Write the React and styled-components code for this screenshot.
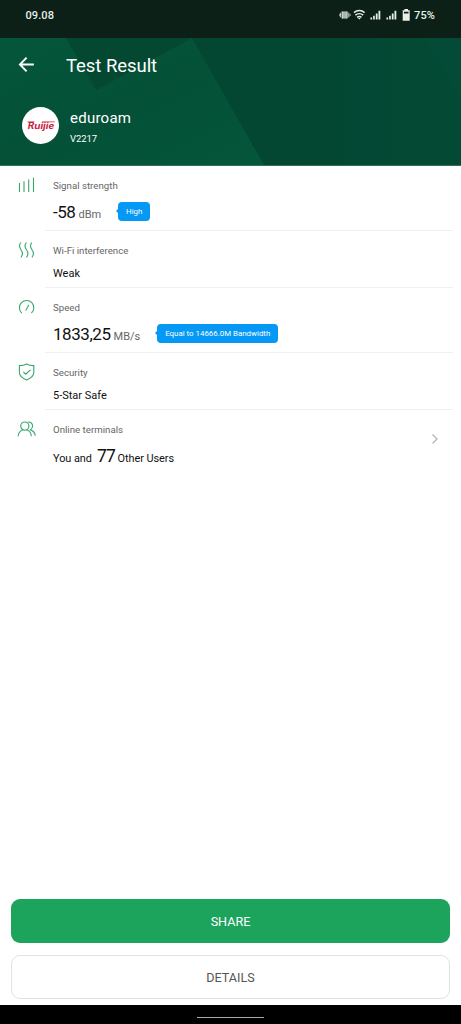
import React from 'react';
import styled, { createGlobalStyle } from 'styled-components';

function App() {
  return (
    <Screen>
      <GlobalStyle />
      <StatusBar>
        <Time>09.08</Time>
        <StatusIcons />
        <Battery>75%</Battery>
      </StatusBar>
      <Header>
        <HeaderPattern />
        <TitleBar>
          <BackIcon />
          <Title>Test Result</Title>
        </TitleBar>
        <Network>
          <Avatar>
            <Logo />
          </Avatar>
          <NetworkInfo>
            <Ssid>eduroam</Ssid>
            <Device>V2217</Device>
          </NetworkInfo>
        </Network>
      </Header>
      <List>
        <Row $height={65}>
          <SignalIcon />
          <Content>
            <Label>Signal strength</Label>
            <Value>
              <Big>-58</Big>
              <Unit>dBm</Unit>
              <Tag $width={32}>High</Tag>
            </Value>
          </Content>
        </Row>
        <Row $height={57}>
          <WavesIcon />
          <Content>
            <Label>Wi-Fi interference</Label>
            <Text>Weak</Text>
          </Content>
        </Row>
        <Row $height={65}>
          <SpeedIcon />
          <Content>
            <Label>Speed</Label>
            <Value>
              <Big>1833,25</Big>
              <Unit>MB/s</Unit>
              <Tag $width={121}>Equal to 14666.0M Bandwidth</Tag>
            </Value>
          </Content>
        </Row>
        <Row $height={57}>
          <ShieldIcon />
          <Content>
            <Label>Security</Label>
            <Text>5-Star Safe</Text>
          </Content>
        </Row>
        <Row $height={65}>
          <UsersIcon />
          <Content $last>
            <Label>Online terminals</Label>
            <Users>
              You and <Count>77</Count> Other Users
            </Users>
          </Content>
          <Chevron />
        </Row>
      </List>
      <Actions>
        <Button $primary>SHARE</Button>
        <Button>DETAILS</Button>
      </Actions>
      <NavBar>
        <Handle />
      </NavBar>
    </Screen>
  );
}

export default App;

function StatusIcons() {
  return (
    <svg width="72" height="14" viewBox="0 0 72 14" fill="#e8efe9">
      <path d="M3 3.4h5v7.2H3z" opacity=".72" />
      <path d="M2.6 3.4h.9v7.2h-.9zM7.7 3.4h.9v7.2h-.9zM.9 4.8h.9v4.4h-.9zM9.4 4.8h.9v4.4h-.9zM-.2 6.2h.8v1.6h-.8zM10.8 6.2h.8v1.6h-.8z" />
      <g fill="none" stroke="#e8efe9" strokeWidth="1.5">
        <path d="M15 4.6c3-2.7 7.6-2.7 10.6 0" />
        <path d="M16.4 7.1c2.2-1.9 5.6-1.9 7.8 0" />
        <path d="M18.1 9.3c1.3-1 3.1-1 4.4 0" />
      </g>
      <path d="M18.9 10h2.8l-1.4 1.6z" />
      <path d="M31.4 9.6h1.7v2h-1.7zM34.1 7.8h1.7v3.8h-1.7zM36.8 5.5h1.8v6.1h-1.8zM39.5 2.7h1.8v8.9h-1.8z" />
      <path d="M47.4 9.6h1.7v2h-1.7zM50.1 7.8h1.7v3.8h-1.7zM52.8 5.5h1.8v6.1h-1.8zM55.5 2.7h1.8v8.9h-1.8z" />
      <path
        fillRule="evenodd"
        d="M65.4 1H69v1.2h1.7v10.6h-7V2.2h1.7zM64.9 3.7v1.7h4.6V3.7z"
      />
    </svg>
  );
}

function HeaderPattern() {
  return (
    <Pattern viewBox="0 0 461 127" preserveAspectRatio="none">
      <defs>
        <linearGradient id="right" x1="0" y1="0" x2="1" y2="0">
          <stop offset="0" stopColor="#034732" />
          <stop offset=".55" stopColor="#034632" />
          <stop offset="1" stopColor="#034a35" />
        </linearGradient>
        <linearGradient id="left" x1="0" y1="0" x2="1" y2="1">
          <stop offset="0" stopColor="#04563a" />
          <stop offset=".5" stopColor="#045138" />
          <stop offset="1" stopColor="#04563a" />
        </linearGradient>
      </defs>
      <path d="M0 0h461v127H0z" fill="url(#right)" />
      <path d="M0 0h192l72 127H0z" fill="url(#left)" />
      <path d="M66 0h126L96 52z" fill="#044832" />
      <path d="M425 0h36v64z" fill="#044d38" opacity=".6" />
    </Pattern>
  );
}

function BackIcon() {
  return (
    <svg width="16" height="16" viewBox="0 0 16 16" fill="none" stroke="#fff" strokeWidth="1.9">
      <path d="M15.8 7.500H2.200M8.600.700L1.900 7.500l6.700 6.800" />
    </svg>
  );
}

function Logo() {
  return (
    <svg width="30" height="14" viewBox="0 0 30 14">
      <text
        x="1.8"
        y="9.6"
        fill="#c8213f"
        fontFamily="Inter, Roboto, sans-serif"
        fontSize="9"
        fontWeight="700"
        fontStyle="italic"
        textLength="26.5"
        lengthAdjust="spacingAndGlyphs"
      >
        Ruijie
      </text>
      <path d="M1.5 2.5h7l-.4 1H1.800zM16 2.500h12.800l-.4.8H16z" fill="#c8213f" />
    </svg>
  );
}

function SignalIcon() {
  return (
    <Icon viewBox="0 0 20 20">
      <path d="M2.5 8v9M7 6.2V17M11.7 4.5V17M16.5 2.7V17" />
    </Icon>
  );
}

function WavesIcon() {
  return (
    <Icon viewBox="0 0 20 20">
      <path d="M3.9 2.500C1.300 5.300 2.400 7.500 4 9.700s2.300 4.800-.1 7.600" />
      <path d="M9.400 2.500c-2.600 2.800-1.500 5 .1 7.200s2.300 4.800-.1 7.600" />
      <path d="M14.900 2.500c-2.600 2.800-1.500 5 .1 7.200s2.300 4.800-.1 7.600" />
    </Icon>
  );
}

function SpeedIcon() {
  return (
    <Icon viewBox="0 0 20 20">
      <path d="M4.8 16a7.2 7.2 0 1 1 9.6 0M8.700 13.400l3.200-5.600" />
    </Icon>
  );
}

function ShieldIcon() {
  return (
    <Icon viewBox="0 0 20 20">
      <path d="M9.6 1.900c2 1.100 4.400 1.600 7.200 1.700v7c0 3.600-3.200 5.800-7.200 7.500-4-1.700-7.200-3.900-7.200-7.500v-7c2.800-.1 5.200-.6 7.200-1.700zM6.300 9.900l2.400 2.300 4.700-4.400" />
    </Icon>
  );
}

function UsersIcon() {
  return (
    <Icon viewBox="0 0 20 20">
      <circle cx="7.8" cy="7.1" r="4.1" />
      <path d="M1.100 17.200c.3-3.200 2-5.400 4.500-6.300M10 10.900c2.500.9 4.100 3.100 4.400 6.300M11 3.100c2.700-.3 4.600 1.500 4.600 3.900 0 1.700-.8 3-2.200 3.900 2.600.8 4.500 2.800 4.900 5.900" />
    </Icon>
  );
}

function Chevron() {
  return (
    <ChevronSvg width="8" height="12" viewBox="0 0 8 12">
      <path d="M1.5 1.500L6 6l-4.500 4.500" />
    </ChevronSvg>
  );
}

const GlobalStyle = createGlobalStyle`
  * {
    box-sizing: border-box;
  }
  body {
    margin: 0;
    font-family: Roboto, sans-serif;
  }
`;
const Screen = styled.div`
  display: flex;
  flex-direction: column;
  height: 1024px;
  background: #fff;
`;
const StatusBar = styled.div`
  display: flex;
  align-items: center;
  height: 38px;
  padding: 0 26px 8px 25.5px;
  background: #0c2017;
  color: #e8efe9;
  font-size: 11px;
  font-weight: 500;
  svg {
    margin-right: 3px;
  }
`;
const Time = styled.span`
  flex: 1;
  letter-spacing: 0.1px;
`;
const Battery = styled.span`
  letter-spacing: 0.1px;
`;
const Header = styled.header`
  position: relative;
  height: 128px;
  border-bottom: 1px solid #36705a;
  color: #fff;
`;
const Pattern = styled.svg`
  position: absolute;
  width: 100%;
  height: 100%;
`;
const TitleBar = styled.div`
  position: relative;
  display: flex;
  align-items: center;
  gap: 32px;
  height: 53px;
  padding-left: 18px;
`;
const Title = styled.h1`
  margin: 2px 0 0;
  font-size: 18.5px;
  font-weight: 400;
  letter-spacing: -0.05px;
`;
const Network = styled.div`
  position: relative;
  display: flex;
  gap: 11px;
  padding: 15px 22px 0;
`;
const Avatar = styled.div`
  display: flex;
  align-items: center;
  justify-content: center;
  width: 37px;
  height: 37px;
  margin-top: 1px;
  border-radius: 50%;
  background: #fff;
`;
const NetworkInfo = styled.div`
  display: flex;
  flex-direction: column;
  padding-top: 1px;
`;
const Ssid = styled.span`
  font-size: 15px;
  line-height: 22px;
  letter-spacing: 0.25px;
`;
const Device = styled.span`
  font-size: 9.5px;
  line-height: 19px;
  letter-spacing: -0.05px;
`;
const List = styled.main`
  flex: 1;
`;
const Row = styled.section`
  display: flex;
  height: ${({ $height }) => $height}px;
  padding: 0 8px 0 17px;
`;
const Icon = styled.svg`
  width: 20px;
  height: 20px;
  margin-top: 9px;
  flex-shrink: 0;
  fill: none;
  stroke: #36a76c;
  stroke-width: 1.1;
`;
const Content = styled.div`
  flex: 1;
  margin-left: 8px;
  padding: 12px 0 0 8px;
  border-bottom: ${({ $last }) => ($last ? 'none' : '1px solid #f0f0f0')};
`;
const Label = styled.div`
  color: #666;
  font-size: 9.7px;
  line-height: 16px;
`;
const Value = styled.div`
  display: flex;
  align-items: baseline;
  height: 24px;
  margin-top: 6px;
  line-height: 24px;
`;
const Big = styled.span`
  color: #111;
  font-size: 17px;
  letter-spacing: -0.45px;
`;
const Unit = styled.span`
  margin-left: 3px;
  color: #666;
  font-size: 11px;
`;
const Tag = styled.span`
  position: relative;
  width: ${({ $width }) => $width}px;
  height: 19px;
  align-self: flex-start;
  margin: 1.5px 0 0 17px;
  border-radius: 4px;
  background: #0598f5;
  color: #fff;
  font-size: 7.9px;
  line-height: 19px;
  text-align: center;
  white-space: nowrap;
  &::before {
    content: '';
    position: absolute;
    top: 7px;
    left: -2px;
    border: solid transparent;
    border-width: 2.5px 2px 2.5px 0;
    border-right-color: #0598f5;
  }
`;
const Text = styled.div`
  margin-top: 7px;
  color: #111;
  font-size: 11px;
  line-height: 16px;
`;
const Users = styled.div`
  display: flex;
  align-items: baseline;
  margin-top: 6px;
  color: #111;
  font-size: 10.9px;
  line-height: 24px;
  letter-spacing: -0.05px;
  white-space: pre;
`;
const Count = styled.span`
  margin-left: 2.5px;
  font-size: 17.5px;
  letter-spacing: -0.9px;
`;
const ChevronSvg = styled.svg`
  margin: 23px 14px 0 -7px;
  fill: none;
  stroke: #b5b5b5;
  stroke-width: 1.3;
`;
const Actions = styled.div`
  display: flex;
  flex-direction: column;
  gap: 12px;
  padding: 0 11px 6px;
`;
const Button = styled.button`
  height: 44px;
  border: ${({ $primary }) => ($primary ? 'none' : '1px solid #e3e3e3')};
  border-radius: 9px;
  background: ${({ $primary }) => ($primary ? '#1ca35c' : '#fff')};
  color: ${({ $primary }) => ($primary ? '#fff' : '#555')};
  font-family: inherit;
  font-size: 12.6px;
`;
const NavBar = styled.footer`
  display: flex;
  justify-content: center;
  height: 19px;
  padding-top: 12px;
  background: #000;
`;
const Handle = styled.div`
  width: 67px;
  height: 1px;
  background: #aaa;
`;
